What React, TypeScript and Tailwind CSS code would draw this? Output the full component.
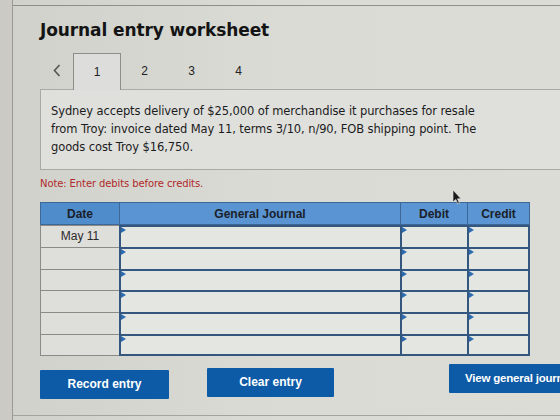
import React from "react";

const rows = ["May 11", "", "", "", "", ""];

function Marker() {
  return (
    <svg className="absolute left-0 top-0" width="6" height="7" viewBox="0 0 6 7">
      <path d="M0 0 L5 3 L0 6 Z" fill="#2d6bb0" />
    </svg>
  );
}

function InputCell({ last }: { last?: boolean }) {
  return (
    <div
      className={`relative h-full bg-[#e4e6e2] border-t-[2px] border-l-[2px] border-[#33577f] ${last ? "border-r-[2px]" : ""}`}
    >
      <Marker />
    </div>
  );
}

export default function App() {
  return (
    <div className="w-[560px] h-[420px] overflow-hidden relative bg-gradient-to-r from-[#cfd1ca] via-[#dadbd5] to-[#dcdcd7] flex">
      {/* outer frame edge */}
      <div className="w-[13px] shrink-0 border-r border-[#9a9b96] bg-[#cbcac4]" />

      <div className="flex-1 pl-[27px] pt-[5px] border-t border-[#8e8f8a] mt-[5px] relative">
        <h1 className="font-['DejaVu_Sans'] font-bold text-[17px] leading-[20px] text-[#141414] mt-[9px] tracking-[-0.1px]">
          Journal entry worksheet
        </h1>

        {/* step tabs */}
        <div className="flex items-end mt-[13px] h-[36px] font-['Liberation_Sans'] text-[12px] text-[#222]">
          <div className="w-[33px] h-full flex items-center justify-center pb-[2px]">
            <svg width="8" height="13" viewBox="0 0 8 13">
              <path d="M6.5 1 L1.5 6.5 L6.5 12" fill="none" stroke="#555" strokeWidth="1.6" />
            </svg>
          </div>
          <div className="w-[48px] h-[37px] -mb-[1px] border border-b-0 border-[#8d8e89] bg-[#dddedb] flex items-center justify-center relative z-10">
            1
          </div>
          <div className="w-[47px] h-full flex items-center justify-center">2</div>
          <div className="w-[47px] h-full flex items-center justify-center">3</div>
          <div className="w-[47px] h-full flex items-center justify-center">4</div>
        </div>

        {/* problem statement */}
        <div className="border border-[#a9aaa5] bg-[#dfe0dc] -mr-[10px] h-[81px] pl-[10px] pt-[12px]">
          <p className="font-['DejaVu_Sans'] text-[11.5px] leading-[18px] text-[#1c1c1c] tracking-[-0.1px] w-[440px]">
            Sydney accepts delivery of $25,000 of merchandise it purchases for resale from Troy: invoice dated May 11, terms 3/10, n/90, FOB shipping point. The goods cost Troy $16,750.
          </p>
        </div>

        <p className="font-['DejaVu_Sans'] text-[10px] text-[#b02a2a] mt-[8px] leading-[12px] tracking-[-0.1px]">
          Note: Enter debits before credits.
        </p>

        {/* journal grid */}
        <div className="mt-[12px] w-[490px] grid grid-cols-[79px_281px_67px_63px] font-['Liberation_Sans'] text-[12px]">
          <div className="h-[23px] bg-[#4f8ccc] border border-r-0 border-[#3d6797] flex items-center justify-center font-bold text-[#1a1f2a]">
            Date
          </div>
          <div className="h-[23px] bg-[#5a94d2] border border-r-0 border-[#3d6797] flex items-center justify-center font-bold text-[#1a1f2a]">
            General Journal
          </div>
          <div className="h-[23px] bg-[#5b95d3] border border-r-0 border-[#3d6797] flex items-center justify-center font-bold text-[#1a1f2a]">
            Debit
          </div>
          <div className="h-[23px] bg-[#5b95d3] border border-[#3d6797] flex items-center justify-center font-bold text-[#1a1f2a]">
            Credit
          </div>
          {rows.map((d, i) => (
            <React.Fragment key={i}>
              <div
                className={`h-[21.8px] bg-[#dedfdb] border-l border-t border-[#8a8b87] ${i === rows.length - 1 ? "border-b" : ""} flex items-center justify-center text-[12px] text-[#2a2a2a]`}
              >
                {d}
              </div>
              <div className={`h-[21.8px] ${i === rows.length - 1 ? "border-b-[2px] border-[#33577f]" : ""}`}>
                <InputCell />
              </div>
              <div className={`h-[21.8px] ${i === rows.length - 1 ? "border-b-[2px] border-[#33577f]" : ""}`}>
                <InputCell />
              </div>
              <div className={`h-[21.8px] ${i === rows.length - 1 ? "border-b-[2px] border-[#33577f]" : ""}`}>
                <InputCell last />
              </div>
            </React.Fragment>
          ))}
        </div>

        {/* actions */}
        <div className="flex items-start mt-[12px] font-['Liberation_Sans'] font-bold text-[12px] text-white">
          <button className="w-[129px] h-[29px] mt-[2px] bg-[#0d5aa6] rounded-[1px] flex items-center justify-center">
            Record entry
          </button>
          <button className="w-[127px] h-[29px] ml-[38px] bg-[#0d5aa6] rounded-[1px] flex items-center justify-center">
            Clear entry
          </button>
          <button className="w-[130px] h-[29px] -mt-[4px] ml-[115px] bg-[#0d5aa6] rounded-[1px] flex items-center pl-[16px] whitespace-nowrap shrink-0 text-[11.5px] tracking-[-0.2px]">
            View general journal
          </button>
        </div>

        <div className="absolute left-0 right-0 top-[409px] border-t border-[#a3a49f]" />
      </div>

      {/* mouse pointer */}
      <svg className="absolute left-[452px] top-[190px]" width="10" height="15" viewBox="0 0 10 15">
        <path d="M1 0 L1 12 L3.8 9.4 L5.8 14 L7.4 13.3 L5.5 8.8 L9 8.8 Z" fill="#1a1a1a" stroke="#e8e8e8" strokeWidth="0.6" />
      </svg>
    </div>
  );
}
